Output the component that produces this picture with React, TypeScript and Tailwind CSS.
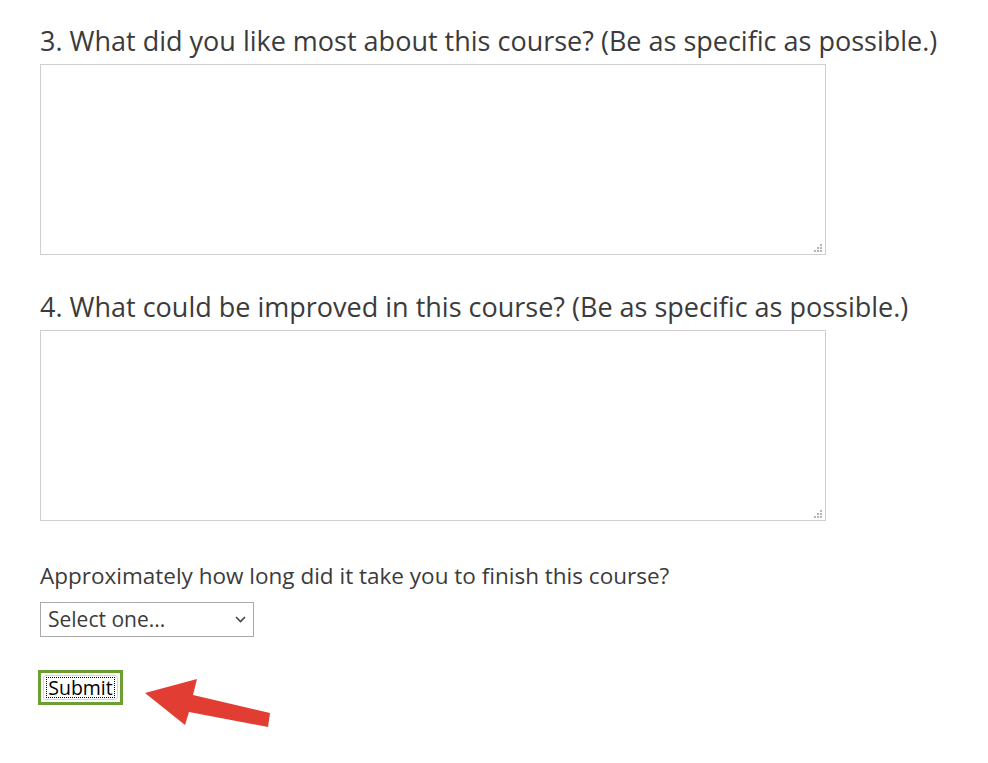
import React from "react";

const font = { fontFamily: '"Open Sans", "Noto Sans", sans-serif' };

// dotted resize grip in the lower-right corner of the textareas
function Grip() {
  const dots = [
    [6, 0],
    [3, 3],
    [6, 3],
    [0, 6],
    [3, 6],
    [6, 6],
  ];
  return (
    <div className="absolute right-[4px] bottom-[3px] w-[8px] h-[8px] pointer-events-none">
      {dots.map(([x, y], i) => (
        <span
          key={i}
          className="absolute w-[2px] h-[2px] bg-[#b5b5b5]"
          style={{ left: x, top: y }}
        />
      ))}
    </div>
  );
}

function Question({ label }: { label: string }) {
  return (
    <div className="flex flex-col">
      <h2 className="text-[27px] leading-[34px] text-[#3b3b3b]">{label}</h2>
      <div className="relative mt-[6px] w-[786px] h-[191px]">
        <textarea className="block w-full h-full resize-none border border-[#cfcfcf] bg-white outline-none" />
        <Grip />
      </div>
    </div>
  );
}

export default function App() {
  return (
    <div className="min-h-screen bg-white pl-[40px] pt-[24px]" style={font}>
      <div className="flex flex-col gap-[35px]">
        <Question label="3. What did you like most about this course? (Be as specific as possible.)" />
        <Question label="4. What could be improved in this course? (Be as specific as possible.)" />
      </div>

      <div className="mt-[40px] text-[22.5px] leading-[30px] text-[#3b3b3b]">
        Approximately how long did it take you to finish this course?
      </div>

      <div className="relative mt-[11px] w-[214px] h-[35px]">
        <select
          className="appearance-none w-full h-full border border-[#aaaaaa] bg-white pl-[7px] text-[21px] text-[#3b3b3b] outline-none"
          style={font}
          defaultValue=""
        >
          <option value="">Select one...</option>
        </select>
        <svg
          className="absolute right-[8px] top-[14px] pointer-events-none"
          width="11"
          height="7"
          viewBox="0 0 11 7"
          fill="none"
        >
          <path d="M1 1l4.5 4.5L10 1" stroke="#444" strokeWidth="1.6" />
        </svg>
      </div>

      <div className="flex items-start mt-[33px] ml-[-2px] gap-[22px]">
        <button
          className="w-[85px] h-[35px] border-[3px] border-[#6b9f32] bg-white p-[2px] text-[19.5px] leading-none text-black"
          style={font}
        >
          <span className="flex items-center justify-center w-full h-full rounded-[3px] border border-[#d6d6d6]">
            <span className="px-[1px] outline-1 outline-dotted outline-black">Submit</span>
          </span>
        </button>

        <svg width="126" height="50" viewBox="0 0 126 50" className="mt-[9px]">
          <polygon points="0,14 52,0 48,16 125,34 123,48 44,33 40,46" fill="#e13d32" />
        </svg>
      </div>
    </div>
  );
}
